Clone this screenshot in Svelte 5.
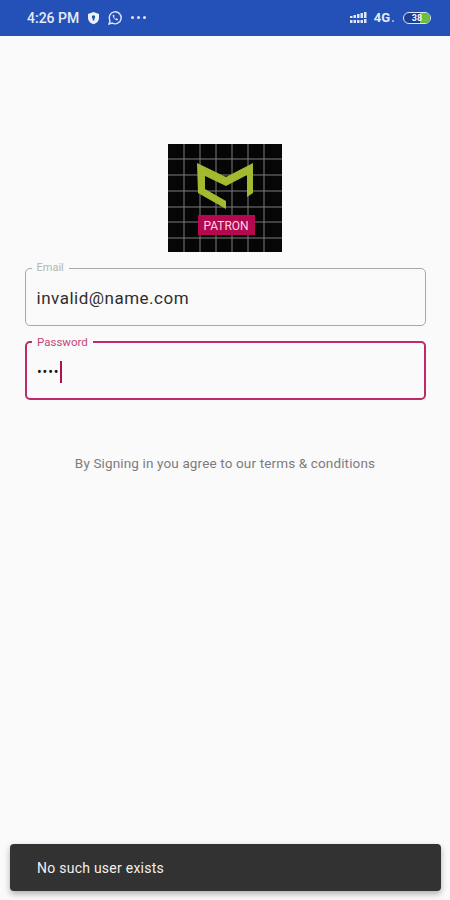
<script lang="ts">
  let email = 'invalid@name.com';
  const gridX = [16, 32, 48, 64, 80, 96];
  const gridY = [15, 31, 47, 63, 78, 94];
</script>

<div class="screen">
  <header class="status">
    <div class="status-left">
      <span class="time">4:26 PM</span>
      <svg class="shield" width="13" height="14" viewBox="0 0 13 14">
        <path d="M6.5 1 L12 3 V7 C12 10 9.5 12.3 6.5 13.2 C3.5 12.3 1 10 1 7 V3 Z" fill="#eef2fb" />
        <circle cx="6.5" cy="6" r="1.7" fill="#2451b7" />
        <rect x="5.7" y="6.5" width="1.6" height="3" fill="#2451b7" />
      </svg>
      <svg class="whatsapp" width="16" height="16" viewBox="0 0 16 16">
        <path d="M2 14 L3 10.8 A6 6 0 1 1 5.2 13 Z" fill="none" stroke="#dfe6f6" stroke-width="1.4" />
        <path d="M5.8 5 C5.5 7.5 8 10.5 10.8 10.3 L11 9 L9.5 8.3 L8.9 9 C8 8.6 7.3 7.8 7 7 L7.6 6.3 L7 4.8 Z" fill="#dfe6f6" />
      </svg>
      <span class="dots"><i></i><i></i><i></i></span>
    </div>
    <div class="status-right">
      <svg width="17" height="12" viewBox="0 0 17 12" fill="#dfe6f6">
        <rect x="0" y="4" width="2.5" height="2" /><rect x="3.5" y="3" width="2.5" height="3" /><rect x="7" y="2" width="2.5" height="4" /><rect x="10.5" y="1" width="2.5" height="5" /><rect x="14" y="0" width="2.5" height="6" />
        <rect x="0" y="8" width="2.5" height="3" /><rect x="3.5" y="8" width="2.5" height="3" /><rect x="7" y="8" width="2.5" height="3" /><rect x="10.5" y="8" width="2.5" height="3" /><rect x="14" y="7" width="2.5" height="4" />
      </svg>
      <span class="net">4G</span>
      <span class="tiny"></span>
      <span class="battery"><span class="level"></span><span class="pct">38</span></span>
    </div>
  </header>

  <main class="content">
    <svg class="logo" width="114" height="108" viewBox="0 0 114 108">
      <rect width="114" height="108" fill="#060606" />
      {#each gridX as x}
        <line x1={x} y1="0" x2={x} y2="108" stroke="#7c7c7c" stroke-width="1" />
      {/each}
      {#each gridY as y}
        <line x1="0" y1={y} x2="114" y2={y} stroke="#7c7c7c" stroke-width="1" />
      {/each}
      <path d="M29 19 L58 33 L85 19 L85 49 L79 53 L79 31 L58 42 L37 32 L37 45 L58 57 L58 65 L30 49 Z" fill="#a3b92f" />
      <rect x="30" y="71" width="57" height="20" fill="#b4084f" />
      <text x="58" y="85.5" class="patron" text-anchor="middle">PATRON</text>
    </svg>

    <div class="form">
      <div class="field">
        <span class="label">Email</span>
        <span class="value">{email}</span>
      </div>
      <div class="field focused">
        <span class="label">Password</span>
        <span class="value pass">••••<span class="caret"></span></span>
      </div>
    </div>

    <p class="terms">By Signing in you agree to our terms &amp; conditions</p>
  </main>

  <div class="snackbar">No such user exists</div>
</div>

<style>
  :global(body) {
    margin: 0;
    background: #fafafa;
  }

  .screen {
    position: relative;
    width: 450px;
    height: 900px;
    overflow: hidden;
    background: #fafafa;
    font-family: Roboto, "Liberation Sans", sans-serif;
  }

  .status {
    height: 36px;
    box-sizing: border-box;
    padding: 0 19px 1px 27px;
    display: flex;
    align-items: center;
    justify-content: space-between;
    background: #2451b7;
    color: #e6ebf8;
  }

  .status-left,
  .status-right {
    display: flex;
    align-items: center;
  }

  .time {
    font-size: 14px;
    font-weight: 500;
    margin-right: 8px;
  }

  .whatsapp {
    margin-left: 7px;
  }

  .dots {
    display: flex;
    gap: 3px;
    margin-left: 8px;
  }

  .dots i {
    width: 3px;
    height: 3px;
    border-radius: 50%;
    background: #dfe6f6;
  }

  .net {
    font-size: 13px;
    font-weight: 700;
    margin-left: 7px;
  }

  .tiny {
    width: 2px;
    height: 2px;
    margin: 7px 9px 0 2px;
    background: #8ea6de;
  }

  .battery {
    position: relative;
    display: block;
    width: 28px;
    height: 12px;
    box-sizing: border-box;
    border: 1px solid #dfe6f6;
    border-radius: 6px;
    overflow: hidden;
    background: #1c3f94;
  }

  .level {
    position: absolute;
    top: 0;
    right: 0;
    bottom: 0;
    width: 10px;
    background: #6cbf3a;
  }

  .pct {
    position: absolute;
    inset: 0;
    text-align: center;
    font-size: 9px;
    line-height: 10px;
    font-weight: 700;
    color: #f2f5fc;
  }

  .content {
    display: flex;
    flex-direction: column;
    align-items: center;
    padding-top: 108px;
  }

  .logo {
    display: block;
  }

  .form {
    width: 401px;
    margin-top: 16px;
    display: flex;
    flex-direction: column;
    gap: 15px;
  }

  .field {
    position: relative;
    height: 58px;
    box-sizing: border-box;
    border: 1.5px solid #a8a8a8;
    border-radius: 5px;
    display: flex;
    align-items: center;
    padding: 2px 11px 0;
  }

  .field.focused {
    height: 59px;
    border: 2px solid #bd2a66;
    padding-left: 10.5px;
  }

  .label {
    position: absolute;
    top: -7px;
    left: 6px;
    padding: 0 5px;
    background: #fafafa;
    font-size: 11px;
    line-height: 12px;
    color: #b4b4b4;
  }

  .focused .label {
    left: 5.5px;
    top: -7.5px;
    font-size: 11.5px;
    color: #c4447a;
  }

  .value {
    font-size: 17px;
    letter-spacing: 0.5px;
    color: #2e2e2e;
  }

  .pass {
    display: flex;
    align-items: center;
    font-size: 14px;
    letter-spacing: 0.9px;
    color: #111;
  }

  .caret {
    width: 2.5px;
    height: 22px;
    background: #b00f50;
  }

  .terms {
    margin: 55px 0 0;
    font-size: 13.5px;
    letter-spacing: 0.14px;
    color: #7c7c7c;
  }

  .patron {
    font-family: Roboto, "Liberation Sans", sans-serif;
    font-size: 12px;
    font-weight: 400;
    fill: #f6dbe6;
  }

  .snackbar {
    position: absolute;
    left: 10px;
    top: 844px;
    width: 431px;
    height: 47px;
    box-sizing: border-box;
    padding: 0 27px;
    display: flex;
    align-items: center;
    background: #323232;
    border-radius: 4px;
    box-shadow: 0 3px 6px rgba(0, 0, 0, 0.3);
    font-size: 14px;
    letter-spacing: 0.25px;
    color: #f0f0f0;
  }
</style>
